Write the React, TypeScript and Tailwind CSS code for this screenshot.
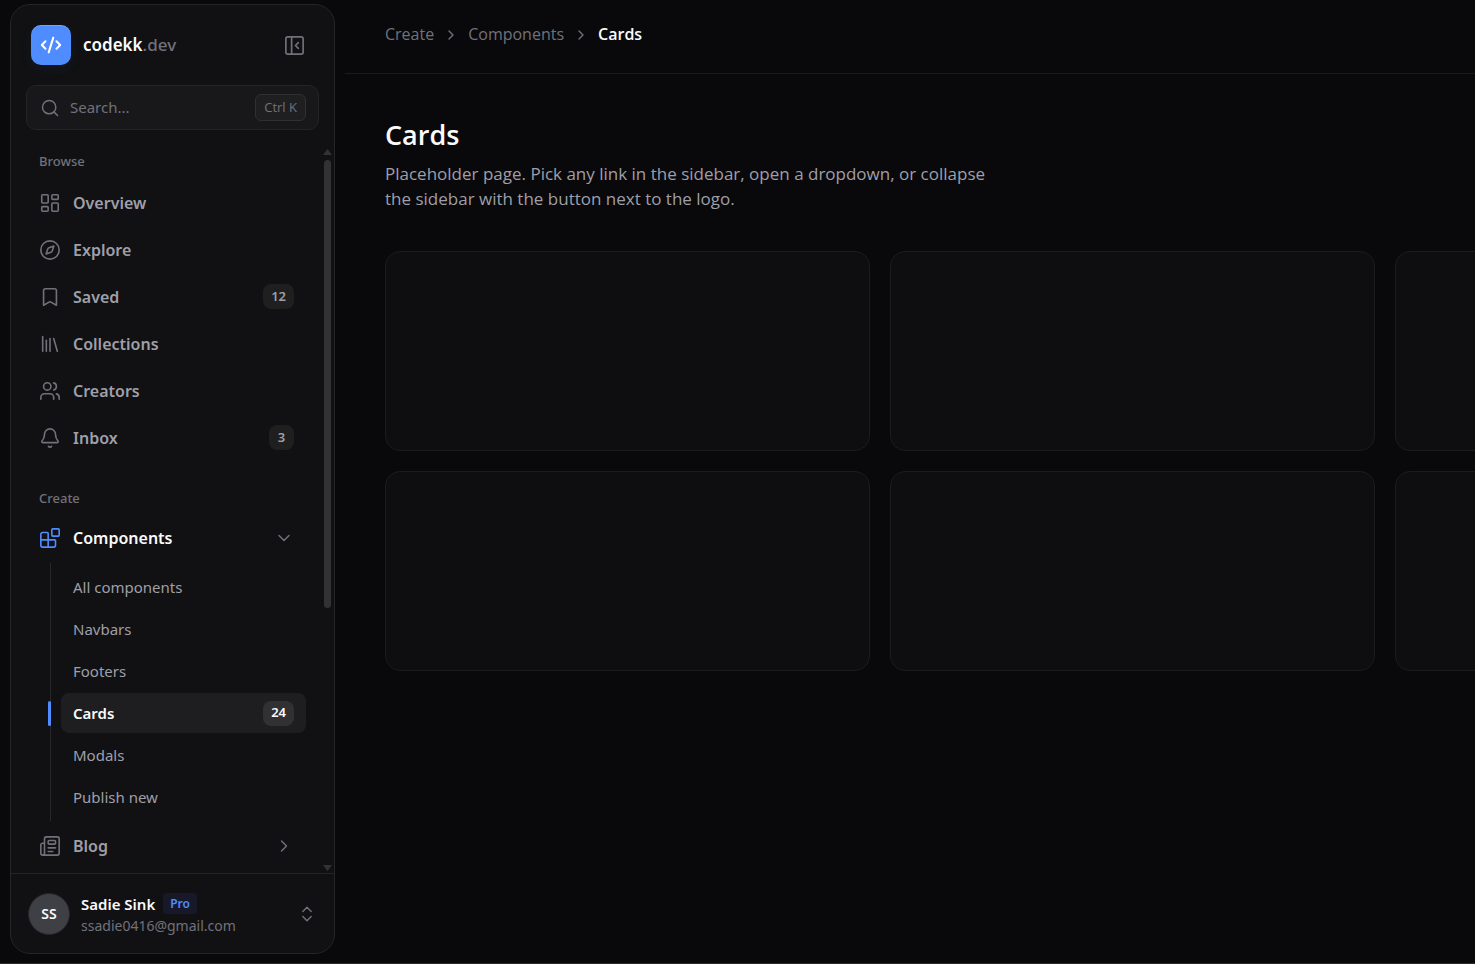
import React from 'react';
import {
  Bell,
  Blocks,
  Bookmark,
  ChevronDown,
  ChevronRight,
  ChevronsUpDown,
  CodeXml,
  Compass,
  LayoutDashboard,
  Library,
  LucideIcon,
  Newspaper,
  PanelLeftClose,
  Search,
  Users,
} from 'lucide-react';

interface NavItem {
  label: string;
  icon: LucideIcon;
  badge?: number;
}

interface SubItem {
  label: string;
  badge?: number;
  active?: boolean;
}

const browseItems: NavItem[] = [
  { label: 'Overview', icon: LayoutDashboard },
  { label: 'Explore', icon: Compass },
  { label: 'Saved', icon: Bookmark, badge: 12 },
  { label: 'Collections', icon: Library },
  { label: 'Creators', icon: Users },
  { label: 'Inbox', icon: Bell, badge: 3 },
];

const componentItems: SubItem[] = [
  { label: 'All components' },
  { label: 'Navbars' },
  { label: 'Footers' },
  { label: 'Cards', badge: 24, active: true },
  { label: 'Modals' },
  { label: 'Publish new' },
];

const Badge: React.FC<{ value: number; active?: boolean }> = ({ value, active }) => (
  <span
    className={`ml-auto flex h-[25px] min-w-[25px] items-center justify-center rounded-lg px-2 text-[13px] font-semibold ${
      active ? 'bg-[#313133] text-zinc-50' : 'bg-[#1f1f20] text-zinc-400'
    }`}
  >
    {value}
  </span>
);

const NavLink: React.FC<{ item: NavItem }> = ({ item }) => {
  const Icon = item.icon;
  return (
    <a href="#" className="flex h-[45px] items-center gap-3 rounded-lg pl-[13px] pr-3 text-base font-semibold text-zinc-400">
      <Icon size={22} strokeWidth={1.75} className="text-zinc-500" />
      {item.label}
      {item.badge && <Badge value={item.badge} />}
    </a>
  );
};

const NavGroup: React.FC<{ label: string; icon: LucideIcon; open?: boolean }> = ({ label, icon: Icon, open }) => (
  <button
    aria-expanded={!!open}
    className={`flex h-[45px] w-full items-center gap-3 rounded-lg pl-[13px] pr-3 text-base font-semibold ${
      open ? 'text-zinc-50' : 'text-zinc-400'
    }`}
  >
    <Icon size={22} strokeWidth={1.75} className={open ? 'text-[#4f8cff]' : 'text-zinc-500'} />
    {label}
    {open ? (
      <ChevronDown size={20} strokeWidth={1.75} className="ml-auto text-zinc-500" />
    ) : (
      <ChevronRight size={20} strokeWidth={1.75} className="ml-auto text-zinc-500" />
    )}
  </button>
);

const SubNav: React.FC = () => (
  <ul className="mb-0.5 ml-6 mt-[3px] flex flex-col gap-0.5 border-l border-zinc-800 py-1 pl-2.5">
    {componentItems.map((item) => (
      <li key={item.label} className="relative">
        {item.active && <span className="absolute -left-[13px] top-2 h-[25px] w-[3px] rounded-xs bg-[#4f8cff]" />}
        <a
          href="#"
          aria-current={item.active ? 'page' : undefined}
          className={`flex h-10 items-center rounded-lg px-3 text-[15px] ${
            item.active ? 'bg-[#1e1e20] font-semibold text-zinc-50' : 'text-zinc-400'
          }`}
        >
          {item.label}
          {item.badge && <Badge value={item.badge} active={item.active} />}
        </a>
      </li>
    ))}
  </ul>
);

const ScrollTrack: React.FC = () => (
  <div aria-hidden="true" className="flex w-[9px] shrink-0 flex-col items-center gap-[5px] pb-0.5 pt-1">
    <svg width="9" height="6" viewBox="0 0 9 6" className="fill-[#323234]">
      <path d="M4.5 0 9 6H0z" />
    </svg>
    <div className="flex w-[7px] flex-1 flex-col">
      <div className="h-[64%] rounded-full bg-[#323234]" />
    </div>
    <svg width="9" height="6" viewBox="0 0 9 6" className="fill-[#323234]">
      <path d="M4.5 6 0 0h9z" />
    </svg>
  </div>
);

const Sidebar: React.FC = () => (
  <aside className="mx-2.5 mb-[9px] mt-1 flex w-[325px] shrink-0 flex-col overflow-hidden rounded-[20px] border border-[#252528] bg-[#111113] font-['Noto_Sans',sans-serif]">
    {/* Logo row */}
    <div className="flex items-center gap-3 px-5 pb-5 pt-5">
      <span className="flex size-10 items-center justify-center rounded-[10px] bg-[#4f8cff] text-white shadow-[0_4px_14px_rgba(79,140,255,0.06),inset_0_1px_0_rgba(255,255,255,0.2)]">
        <CodeXml size={22} strokeWidth={2.25} />
      </span>
      <span className="text-[17px] font-semibold text-zinc-50">
        codekk<span className="font-medium text-zinc-500">.dev</span>
      </span>
      <button aria-label="Collapse sidebar" className="ml-auto mr-2 text-zinc-500">
        <PanelLeftClose size={23} strokeWidth={1.75} />
      </button>
    </div>

    <div className="mx-[15px] flex h-[45px] shrink-0 items-center gap-2.5 rounded-[10px] border border-[#252528] bg-[#18181a] pl-[13px] pr-3">
      <Search size={20} strokeWidth={1.75} className="shrink-0 text-zinc-500" />
      <input
        type="search"
        aria-label="Search"
        placeholder="Search..."
        className="min-w-0 flex-1 bg-transparent text-[15px] text-zinc-50 outline-none placeholder:text-zinc-500"
      />
      <kbd className="flex h-[27px] items-center rounded-md border border-[#303033] bg-[#1f1f21] px-2 font-['Open_Sans',sans-serif] text-[13px] text-zinc-500">
        Ctrl K
      </kbd>
    </div>

    <div className="mt-[15px] flex min-h-0 flex-1 pr-0.5">
      <nav className="min-w-0 flex-1 overflow-hidden pl-[15px] pr-[17px]">
        <h2 className="pl-[13px] pt-1.5 text-[13px] font-medium leading-5 text-zinc-500">Browse</h2>
        <div className="mt-[9px] flex flex-col gap-0.5">
          {browseItems.map((item) => (
            <NavLink key={item.label} item={item} />
          ))}
        </div>
        <h2 className="mt-7 pl-[13px] text-[13px] font-medium leading-5 text-zinc-500">Create</h2>
        <div className="mt-[7px]">
          <NavGroup label="Components" icon={Blocks} open />
          <SubNav />
          <NavGroup label="Blog" icon={Newspaper} />
        </div>
      </nav>
      <ScrollTrack />
    </div>

    {/* Account */}
    <button className="flex h-20 shrink-0 items-center gap-[11px] border-t border-[#252528] px-[17px] text-left">
      <span className="flex size-[42px] items-center justify-center rounded-full border border-zinc-800 bg-[#3f3f46] text-sm font-semibold text-zinc-50">
        SS
      </span>
      <span className="flex flex-col pt-0.5">
        <span className="flex items-center gap-2 text-[15px] font-semibold leading-[22px] text-zinc-50">
          Sadie Sink
          <span className="rounded-sm bg-[#17192b] px-[7px] text-xs font-semibold leading-[21px] text-[#4f8cff]">Pro</span>
        </span>
        <span className="text-sm leading-[22px] text-zinc-500">ssadie0416@gmail.com</span>
      </span>
      <ChevronsUpDown size={20} strokeWidth={1.75} className="ml-auto text-zinc-500" />
    </button>
  </aside>
);

const App: React.FC = () => (
  <div className="flex h-screen overflow-hidden border-b border-[#2c2c2e] bg-[#09090b] font-['Open_Sans',sans-serif] text-zinc-50">
    <Sidebar />
    <main className="min-w-0 flex-1 overflow-hidden">
      <header className="border-b border-[#1b1b1e] px-10 pb-[26px] pt-[22px]">
        <nav aria-label="Breadcrumb" className="flex items-center gap-[9px] text-base leading-[25px] text-zinc-500">
          <a href="#">Create</a>
          <ChevronRight size={16} />
          <a href="#">Components</a>
          <ChevronRight size={16} />
          <span aria-current="page" className="font-semibold text-zinc-50">
            Cards
          </span>
        </nav>
      </header>

      <div className="px-10 pt-10">
        <h1 className="text-[27px] font-semibold leading-[42px]">Cards</h1>
        <p className="mt-[5px] max-w-[610px] text-[17px] leading-[25px] text-zinc-400">
          Placeholder page. Pick any link in the sidebar, open a dropdown, or collapse the sidebar with the button next
          to the logo.
        </p>
        <div className="mt-10 grid grid-cols-[repeat(3,minmax(485px,1fr))] gap-5">
          {Array.from({ length: 6 }, (_, i) => (
            <div key={i} className="h-[200px] rounded-[15px] border border-[#1c1c1f] bg-[#0e0e10]" />
          ))}
        </div>
      </div>
    </main>
  </div>
);

export default App;
